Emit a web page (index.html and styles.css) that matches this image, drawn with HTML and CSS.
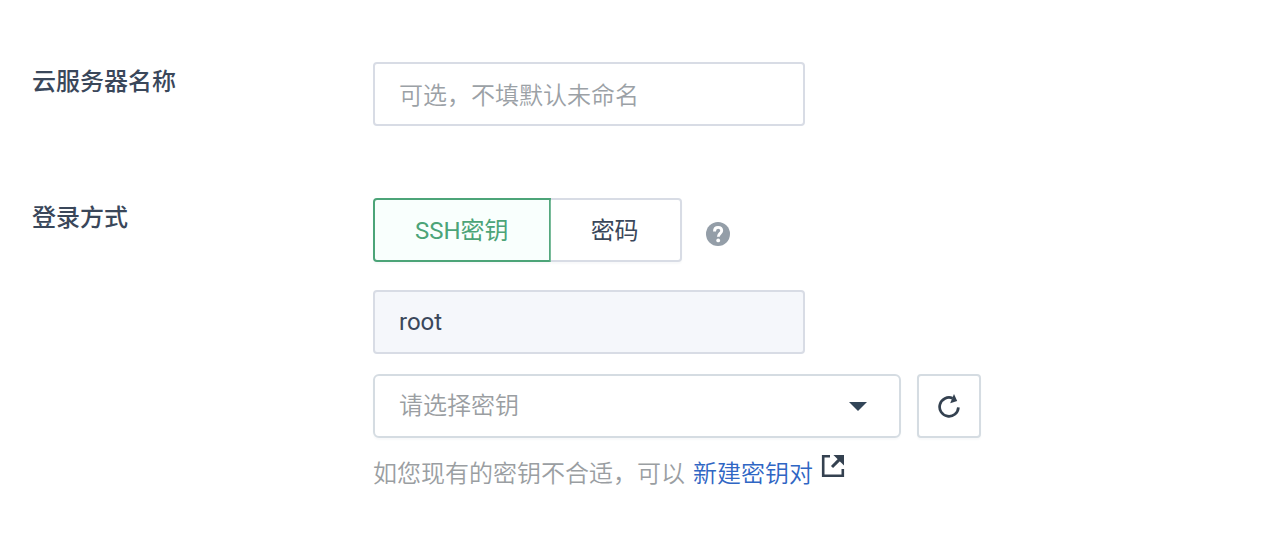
FILE: index.html
```html
<!DOCTYPE html>
<html lang="zh-CN">
<head>
    <meta charset="utf-8">
    <title>云服务器</title>
    <link rel="stylesheet" href="styles.css">
</head>
<body>
    <form class="server-form">
        <div class="form-row">
            <label class="row-label" for="server-name">云服务器名称</label>
            <div class="row-content">
                <input type="text" class="text-input server-name" id="server-name" name="server-name" placeholder="可选，不填默认未命名">
            </div>
        </div>

        <div class="form-row">
            <span class="row-label" id="login-label">登录方式</span>
            <div class="row-content">
                <div class="login-type">
                    <div class="tabs" role="group" aria-labelledby="login-label">
                        <button type="button" class="tab active" aria-pressed="true">SSH密钥</button>
                        <button type="button" class="tab" aria-pressed="false">密码</button>
                    </div>
                    <svg class="help-icon" viewBox="0 0 24 24" aria-hidden="true">
                        <circle cx="12" cy="12" r="12" fill="#949ea8"/>
                        <path d="M8.5 9.4C8.5 7 9.9 5.4 12.1 5.4s3.6 1.4 3.6 3.3c0 2.6-3.4 2.9-3.4 6.1" fill="none" stroke="#fff" stroke-width="2.9"/>
                        <circle cx="12.2" cy="18.4" r="1.9" fill="#fff"/>
                    </svg>
                </div>

                <input type="text" class="text-input username" name="username" value="root" aria-label="用户名" readonly>

                <div class="key-row">
                    <div class="select-box">
                        <select class="key-select" name="key" aria-label="密钥">
                            <option value="">请选择密钥</option>
                        </select>
                        <svg class="caret" viewBox="0 0 18 9" aria-hidden="true">
                            <path d="M0 0h18L9 9z" fill="#324558"/>
                        </svg>
                    </div>
                    <button type="button" class="refresh" aria-label="刷新">
                        <svg class="refresh-icon" viewBox="0 0 24 24" aria-hidden="true">
                            <path d="M15.6 4.2A9.4 9.4 0 1 0 21.4 13.4" fill="none" stroke="#344150" stroke-width="2.7"/>
                            <path d="M17 0l3.2 7-7 2.3z" fill="#344150"/>
                        </svg>
                    </button>
                </div>

                <p class="hint">
                    <span>如您现有的密钥不合适，可以</span>
                    <a class="new-key" href="#">新建密钥对<svg class="link-icon" viewBox="0 0 24 24" aria-hidden="true">
                        <path d="M9 2.2H2.2v19.6h19.6V15" fill="none" stroke="#344150" stroke-width="2.6"/>
                        <path d="M12.4 1H23v10.6z" fill="#344150"/>
                        <path d="M18.6 5.4L11 13" fill="none" stroke="#344150" stroke-width="3"/>
                    </svg></a>
                </p>
            </div>
        </div>
    </form>
</body>
</html>
```

FILE: styles.css
```css
* {
    box-sizing: border-box;
}

body {
    margin: 0;
    background-color: #fff;
    color: #3a475a;
    font-family: Roboto, "Noto Sans CJK SC", sans-serif;
    font-size: 24px;
}

input, select, button {
    margin: 0;
    font-family: inherit;
    font-size: inherit;
    color: inherit;
}

.server-form {
    display: flex;
    flex-direction: column;
    gap: 72px;
    padding: 62px 32px;
}

.form-row {
    display: flex;
    align-items: flex-start;
}

.row-label {
    flex: 0 0 341px;
    line-height: 40px;
    font-weight: 500;
}

.row-content {
    flex: 1;
    max-width: 608px;
}

.text-input {
    display: block;
    width: 432px;
    max-width: 100%;
    height: 64px;
    padding: 0 24px;
    border: 2px solid #d8dce5;
    border-radius: 4px;
    background-color: #fff;
}

.server-name {
    padding-top: 4px;
}

.text-input::placeholder {
    color: #9ba1a6;
    font-weight: 350;
    opacity: 1;
}

.login-type {
    display: flex;
    align-items: center;
    gap: 24px;
    margin-bottom: 28px;
}

.tabs {
    display: flex;
}

.tab {
    height: 64px;
    padding: 0 41px 4px 40px;
    border: 2px solid #d8dce5;
    border-left: none;
    border-radius: 0 4px 4px 0;
    background-color: #fff;
    box-shadow: 0 2px 2px #f8f9fa;
}

.tab.active {
    padding: 0 40px 4px;
    border: 2px solid #4ca478;
    border-radius: 4px 0 0 4px;
    background-color: #f9fffd;
    color: #4ca478;
}

.help-icon {
    width: 24px;
    height: 24px;
    margin-top: 8px;
}

.username {
    margin-bottom: 20px;
    background-color: #f5f7fb;
}

.key-row {
    display: flex;
    gap: 16px;
}

.select-box {
    position: relative;
    flex: 1;
}

.key-select {
    width: 100%;
    height: 64px;
    padding: 0 24px;
    border: 2px solid #d5dce2;
    border-radius: 6px;
    background-color: #fff;
    box-shadow: 0 2px 2px #f8f9fa;
    color: #9a9ea2;
    font-weight: 350;
    appearance: none;
}

.caret {
    position: absolute;
    top: 28px;
    right: 34px;
    width: 18px;
    height: 9px;
    pointer-events: none;
}

.refresh {
    display: flex;
    align-items: center;
    justify-content: center;
    width: 64px;
    height: 64px;
    padding: 0;
    border: 2px solid #d5dce2;
    border-radius: 4px;
    background-color: #fff;
    box-shadow: 0 2px 2px #f8f9fa;
}

.refresh-icon {
    width: 24px;
    height: 24px;
}

.hint {
    display: flex;
    gap: 8px;
    margin: 16px 0 0;
    line-height: 40px;
    color: #9a9ea2;
    font-weight: 350;
}

.new-key {
    display: flex;
    gap: 8px;
    color: #2f66c4;
    text-decoration: none;
}

.link-icon {
    width: 24px;
    height: 24px;
}
```
